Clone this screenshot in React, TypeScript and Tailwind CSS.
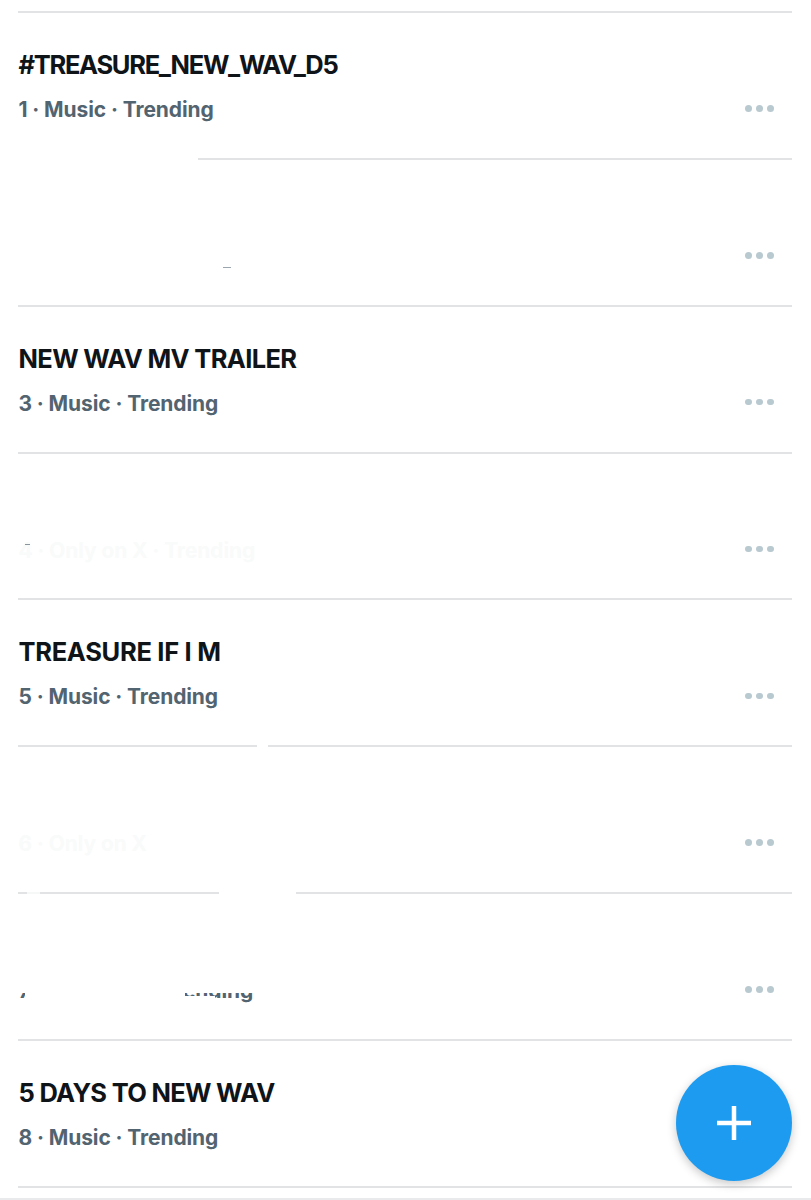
const font = "font-['Inter','Liberation_Sans',sans-serif]";

function Dots() {
  return (
    <div className="mb-[3px] flex gap-[4.5px] pr-[18.5px]">
      <span className="h-[6.5px] w-[6.5px] rounded-full bg-[#b9c9d0]" />
      <span className="h-[6.5px] w-[6.5px] rounded-full bg-[#b9c9d0]" />
      <span className="h-[6.5px] w-[6.5px] rounded-full bg-[#b9c9d0]" />
    </div>
  );
}

function Row({
  title,
  titleClass = "",
  sub,
  subClass = "text-[#536471]",
  cover,
}: {
  title?: string;
  titleClass?: string;
  sub?: string;
  subClass?: string;
  cover?: React.ReactNode;
}) {
  return (
    <div className="relative h-[146.85px] border-b-2 border-[#e1e3e5] pt-[36px]">
      <div className={`h-[32px] pl-[0.5px] text-[25.5px] leading-[32px] font-bold whitespace-nowrap text-[#0f1419] ${titleClass}`}>
        {title}
      </div>
      <div className="mt-[16px] flex h-[26px] items-center justify-between">
        <div className="pl-[0.5px] text-[21px] leading-[26px] font-bold tracking-[-0.1px] whitespace-nowrap">
          <span className={subClass}>{sub}</span>
        </div>
        <Dots />
      </div>
      {cover}
    </div>
  );
}

export default function App() {
  return (
    <div className={`relative h-[1200px] overflow-hidden bg-white ${font}`}>
      <div className="mr-[19px] ml-[18px] h-[13px] border-b-2 border-[#e1e3e5]" />
      <div className="mr-[19px] ml-[18px]">
        <Row
          title="#TREASURE_NEW_WAV_D5"
          titleClass="tracking-[-1.3px]"
          sub="1 · Music · Trending"
          cover={<div className="absolute bottom-[-2px] left-0 h-[3px] w-[180px] bg-white" />}
        />
        <Row cover={<div className="absolute top-[107px] left-[205px] h-[1.5px] w-[8px] bg-[#9aa5ad]" />} />
        <Row title="NEW WAV MV TRAILER" titleClass="tracking-[-0.65px]" sub="3 · Music · Trending" />
        <Row
          sub="4 · Only on X · Trending"
          subClass="text-[#f9fafa]"
          cover={<div className="absolute top-[90px] left-[7px] h-[1px] w-[5px] bg-[#8a949c]" />}
        />
        <Row
          title="TREASURE IF I M"
          titleClass="tracking-[-0.3px]"
          sub="5 · Music · Trending"
          cover={<div className="absolute bottom-[-2px] left-[239px] h-[3px] w-[11px] bg-white" />}
        />
        <Row
          sub="6 · Only on X"
          subClass="text-[#f9fafa]"
          cover={
            <>
              <div className="absolute top-[80px] left-[132px] h-[30px] w-[120px] bg-white" />
              <div className="absolute bottom-[-2px] left-[201px] h-[3px] w-[77px] bg-white" />
              <div className="absolute bottom-[-2px] left-[9px] h-[3px] w-[13px] bg-white/70" />
            </>
          }
        />
        <Row
          sub="7 · Only on X · Trending"
          cover={
            <>
              <div className="absolute top-[80px] left-0 h-[19px] w-[260px] bg-white" />
              <div className="absolute top-[99px] left-[7px] h-[12px] w-[160px] bg-white" />
              <div className="absolute top-[102px] left-[167px] h-[9px] w-[30px] bg-white" />
            </>
          }
        />
        <Row title="5 DAYS TO NEW WAV" titleClass="tracking-[-0.7px]" sub="8 · Music · Trending" />
      </div>
      <div className="mt-[10px] border-t-2 border-[#e8eaeb]" />
      <button className="absolute top-[1065px] left-[676px] flex h-[116px] w-[116px] items-center justify-center rounded-full bg-[#1d9bf0] shadow-[0_3px_10px_rgba(0,0,0,0.22)]">
        <svg width="36" height="36" viewBox="0 0 36 36" fill="none">
          <path d="M18 1v34M1 18h34" stroke="white" strokeWidth="4.5" />
        </svg>
      </button>
    </div>
  );
}
